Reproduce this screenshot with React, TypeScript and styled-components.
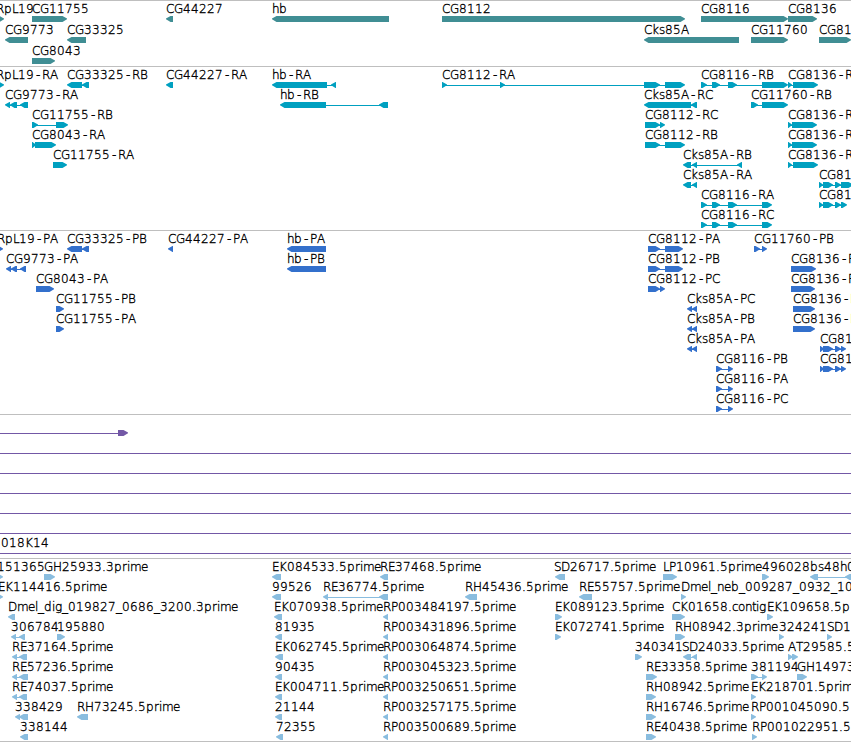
import React from "react";
import styled, { createGlobalStyle } from "styled-components";

const GlobalStyle = createGlobalStyle`
  body { margin: 0; background: #fff; overflow: hidden; }
`;

type Dir = ">" | "<";
type Span = [number, number];
interface Feature { label: string; x: number; dir: Dir; spans: Span[] }
interface TrackData { color: string; height: number; pitch: number; rows: Feature[][] }

const Browser = styled.main`
  display: flex;
  flex-direction: column;
  width: 851px;
  height: 742px;
  overflow: hidden;
  background: #fff;
`;

const Track = styled.section<{ $height: number }>`
  box-sizing: border-box;
  flex: none;
  height: ${(p) => p.$height}px;
  border-top: 1px solid #bfbfbf;
`;

const Row = styled.div<{ $pitch: number }>`
  height: ${(p) => p.$pitch}px;
  margin-top: -1px;
  margin-bottom: 1px;
`;

const RowCanvas = styled.svg`
  display: block;
  width: 851px;
  height: 22px;
  overflow: visible;
`;

const Label = styled.text`
  font-family: "DejaVu Sans Light", "DejaVu Sans", sans-serif;
  font-weight: 200;
  font-size: 12px;
  fill: #000;
  stroke: #000;
  stroke-width: 0.35px;
  white-space: pre;
`;

const ADVANCE: Record<string, number> = {
  C: 8, G: 9, R: 8, A: 8, P: 7, B: 7, L: 6, E: 7, K: 8, H: 9, D: 9, S: 7, T: 7,
  "-": 8, ".": 4, _: 6, p: 8, r: 5, i: 3, m: 11, e: 7, l: 3, d: 8, g: 7, n: 7,
  b: 8, h: 7, k: 7, s: 6, c: 6, o: 7, t: 4,
};

function glyphPositions(text: string, start: number) {
  let x = start;
  return Array.from(text).map((ch) => {
    /* The hyphen sits centred in its wide advance. */
    const at = ch === "-" ? x + 2 : x;
    x += ADVANCE[ch] ?? 8;
    return at;
  }).join(" ");
}

function arrow([a, b]: Span, dir: Dir) {
  const head = Math.min(5, b - a);
  return dir === ">"
    ? `M${a} 16H${b - head + 0.5}L${b} 18.4V19.2L${b - head + 0.5} 22H${a}Z`
    : `M${b} 16H${a + head - 0.5}L${a} 18.4V19.2L${a + head - 0.5} 22H${b}Z`;
}

const f = (label: string, dir: Dir, spans: Span[], x = spans[0][0]): Feature => ({ label, dir, spans, x });

const cg8116: Span[] = [[701, 707], [712, 720], [728, 737], [762, 772]];
const cg8112p: Span[] = [[648, 660], [665, 683]];
const cksP: Span[] = [[687, 692], [692, 697]];
const cg81p: Span[] = [[820, 824], [823, 833], [835, 841], [841, 846]];
const cg8116p: Span[] = [[716, 722], [728, 733]];
const rp = (label: string) => f(label, "<", [[383, 388]]);
const through = (label = "") => f(label, ">", [[-20, -10], [870, 880]], 1);

const tracks: TrackData[] = [
  {
    color: "#408e94", height: 66, pitch: 21,
    rows: [
      [f("RpL19", ">", [[-10, 4]], -4), f("CG11755", ">", [[32, 67]]), f("CG44227", "<", [[166, 173]]),
        f("hb", "<", [[272, 389]]), f("CG8112", ">", [[442, 685]]), f("CG8116", ">", [[701, 788]]), f("CG8136", ">", [[788, 817]])],
      [f("CG9773", "<", [[5, 28]]), f("CG33325", "<", [[67, 86]]), f("Cks85A", "<", [[644, 739]]),
        f("CG11760", ">", [[751, 788]]), f("CG81", ">", [[819, 851]])],
      [f("CG8043", ">", [[32, 55]])],
    ],
  },
  {
    color: "#00a0c0", height: 164, pitch: 20,
    rows: [
      [f("RpL19-RA", ">", [[-10, 4]], -4), f("CG33325-RB", "<", [[67, 82], [82, 89]]), f("CG44227-RA", "<", [[166, 173]]),
        f("hb-RA", "<", [[272, 327], [331, 336]]), f("CG8112-RA", ">", [[442, 447], [500, 505], [644, 660], [665, 685]]),
        f("CG8116-RB", ">", [[701, 707], [712, 720], [728, 737], [762, 788]]), f("CG8136-R", ">", [[788, 792], [793, 818]])],
      [f("CG9773-RA", "<", [[5, 10], [10, 17], [20, 28]]), f("hb-RB", "<", [[280, 326], [379, 388]]),
        f("Cks85A-RC", "<", [[644, 691], [691, 697]]), f("CG11760-RB", ">", [[751, 758], [762, 788]])],
      [f("CG11755-RB", ">", [[32, 38], [56, 68]]), f("CG8112-RC", ">", [[645, 660], [660, 665]]), f("CG8136-R", ">", [[788, 792], [792, 817]])],
      [f("CG8043-RA", ">", [[32, 36], [35, 56]]), f("CG8112-RB", ">", [[645, 660], [665, 685]]), f("CG8136-R", ">", [[788, 792], [792, 817]])],
      [f("CG11755-RA", ">", [[53, 67]]), f("Cks85A-RB", "<", [[683, 691], [692, 697], [737, 742]]), f("CG8136-R", ">", [[788, 792], [793, 818]])],
      [f("Cks85A-RA", "<", [[683, 691], [692, 697]]), f("CG81", ">", [[819, 823], [823, 833], [835, 841], [841, 853]])],
      [f("CG8116-RA", ">", cg8116), f("CG81", ">", [[819, 823], [823, 833], [835, 841], [841, 847]])],
      [f("CG8116-RC", ">", cg8116)],
    ],
  },
  {
    color: "#3370cc", height: 184, pitch: 20,
    rows: [
      [f("RpL19-PA", ">", [[-10, 3]], -3), f("CG33325-PB", "<", [[67, 82], [82, 89]]), f("CG44227-PA", "<", [[168, 173]]),
        f("hb-PA", "<", [[287, 326]]), f("CG8112-PA", ">", cg8112p), f("CG11760-PB", ">", [[754, 760], [762, 767]])],
      [f("CG9773-PA", "<", [[6, 11], [11, 17], [20, 26]]), f("hb-PB", "<", [[287, 326]]), f("CG8112-PB", ">", cg8112p), f("CG8136-P", ">", [[791, 816]])],
      [f("CG8043-PA", ">", [[36, 54]]), f("CG8112-PC", ">", [[648, 660], [660, 665]]), f("CG8136-P", ">", [[791, 815]])],
      [f("CG11755-PB", ">", [[56, 64]]), f("Cks85A-PC", "<", cksP), f("CG8136-P", ">", [[793, 815]])],
      [f("CG11755-PA", ">", [[56, 64]]), f("Cks85A-PB", "<", cksP), f("CG8136-P", ">", [[793, 815]])],
      [f("Cks85A-PA", "<", cksP), f("CG81", ">", cg81p)],
      [f("CG8116-PB", ">", cg8116p), f("CG81", ">", cg81p)],
      [f("CG8116-PA", ">", cg8116p)],
      [f("CG8116-PC", ">", cg8116p)],
    ],
  },
  {
    color: "#7358a6", height: 144, pitch: 20,
    rows: [
      [f("", ">", [[-20, -10], [118, 128]])],
      [through()], [through()], [through()], [through()], [through()],
      [through("018K14")],
    ],
  },
  {
    color: "#8abddf", height: 183, pitch: 20,
    rows: [
      [f("151365", ">", [[-10, 3]], -3), f("GH25933.3prime", ">", [[44, 55]]), f("EK084533.5prime", "<", [[272, 281]]),
        f("RE37468.5prime", "<", [[380, 388]]), f("SD26717.5prime", "<", [[555, 565]], 554), f("LP10961.5prime", ">", [[663, 677]]),
        f("496028", ">", [[762, 769]]), f("bs48h0", "<", [[810, 818], [845, 853]])],
      [f("EK114416.5prime", ">", [[-10, 3]], -2), f("99526", "<", [[272, 281]]), f("RE36774.5prime", "<", [[323, 328], [379, 388]]),
        f("RH45436.5prime", "<", [[465, 477]]), f("RE55757.5prime", "<", [[579, 592]]), f("Dmel_neb_009287_0932_10", ">", [[681, 686]])],
      [f("Dmel_dig_019827_0686_3200.3prime", "<", [[8, 15]]), f("EK070938.5prime", "<", [[274, 282]]), rp("RP003484197.5prime"),
        f("EK089123.5prime", ">", [[555, 562]]), f("CK01658.contig", ">", [[672, 685]]), f("EK109658.5p", ">", [[767, 773]])],
      [f("306784", "<", [[11, 16], [19, 25]]), f("195880", ">", [[57, 65]]), f("81935", "<", [[275, 282]]), rp("RP003431896.5prime"),
        f("EK072741.5prime", ">", [[555, 561]]), f("RH08942.3prime", ">", [[675, 685]]), f("324241", ">", [[779, 784]]), f("SD1", ">", [[827, 832]])],
      [f("RE37164.5prime", "<", [[12, 17], [19, 27]]), f("EK062745.5prime", "<", [[275, 283]]), rp("RP003064874.5prime"),
        f("340341", ">", [[635, 642]]), f("SD24033.5prime", "<", [[683, 691], [692, 697]], 682), f("AT29585.5", ">", [[788, 793], [792, 798]])],
      [f("RE57236.5prime", "<", [[12, 17], [19, 28]]), f("90435", "<", [[275, 282]]), rp("RP003045323.5prime"),
        f("RE33358.5prime", ">", [[646, 657]]), f("381194", ">", [[751, 758], [762, 767]]), f("GH14973", ">", [[797, 807]])],
      [f("RE74037.5prime", "<", [[12, 17], [19, 27]]), f("EK004711.5prime", "<", [[275, 282]]), rp("RP003250651.5prime"),
        f("RH08942.5prime", ">", [[646, 656]]), f("EK218701.5prime", ">", [[751, 756]])],
      [f("338429", "<", [[15, 20], [19, 28]]), f("RH73245.5prime", "<", [[77, 88]]), f("21144", "<", [[275, 282]]), rp("RP003257175.5prime"),
        f("RH16746.5prime", ">", [[646, 656]]), f("RP001045090.5", ">", [[751, 756]])],
      [f("338144", "<", [[20, 28]]), f("72355", "<", [[276, 283]]), rp("RP003500689.5prime"),
        f("RE40438.5prime", ">", [[646, 656]]), f("RP001022951.5", ">", [[752, 757]])],
    ],
  },
];

const EndRule = styled.div`
  flex: none;
  height: 1px;
  background: #bfbfbf;
`;

function FeatureGlyph({ feature, color }: { feature: Feature; color: string }) {
  const { label, x, dir, spans } = feature;
  const first = spans[0][0];
  const last = spans[spans.length - 1][1];
  return (
    <g>
      {spans.length > 1 && <rect x={first + 2} y={19} width={last - first - 4} height={1} fill={color} />}
      {spans.map((s, i) => <path key={i} d={arrow(s, dir)} fill={color} />)}
      {label && <Label x={glyphPositions(label, x)} y={13}>{label}</Label>}
    </g>
  );
}

export default function App() {
  return (
    <>
      <GlobalStyle />
      <Browser>
        {tracks.map((t, ti) => (
          <Track key={ti} $height={t.height}>
            {t.rows.map((row, ri) => (
              <Row key={ri} $pitch={t.pitch}>
                <RowCanvas>
                  {row.map((ft, i) => <FeatureGlyph key={i} feature={ft} color={t.color} />)}
                </RowCanvas>
              </Row>
            ))}
          </Track>
        ))}
        <EndRule />
      </Browser>
    </>
  );
}
